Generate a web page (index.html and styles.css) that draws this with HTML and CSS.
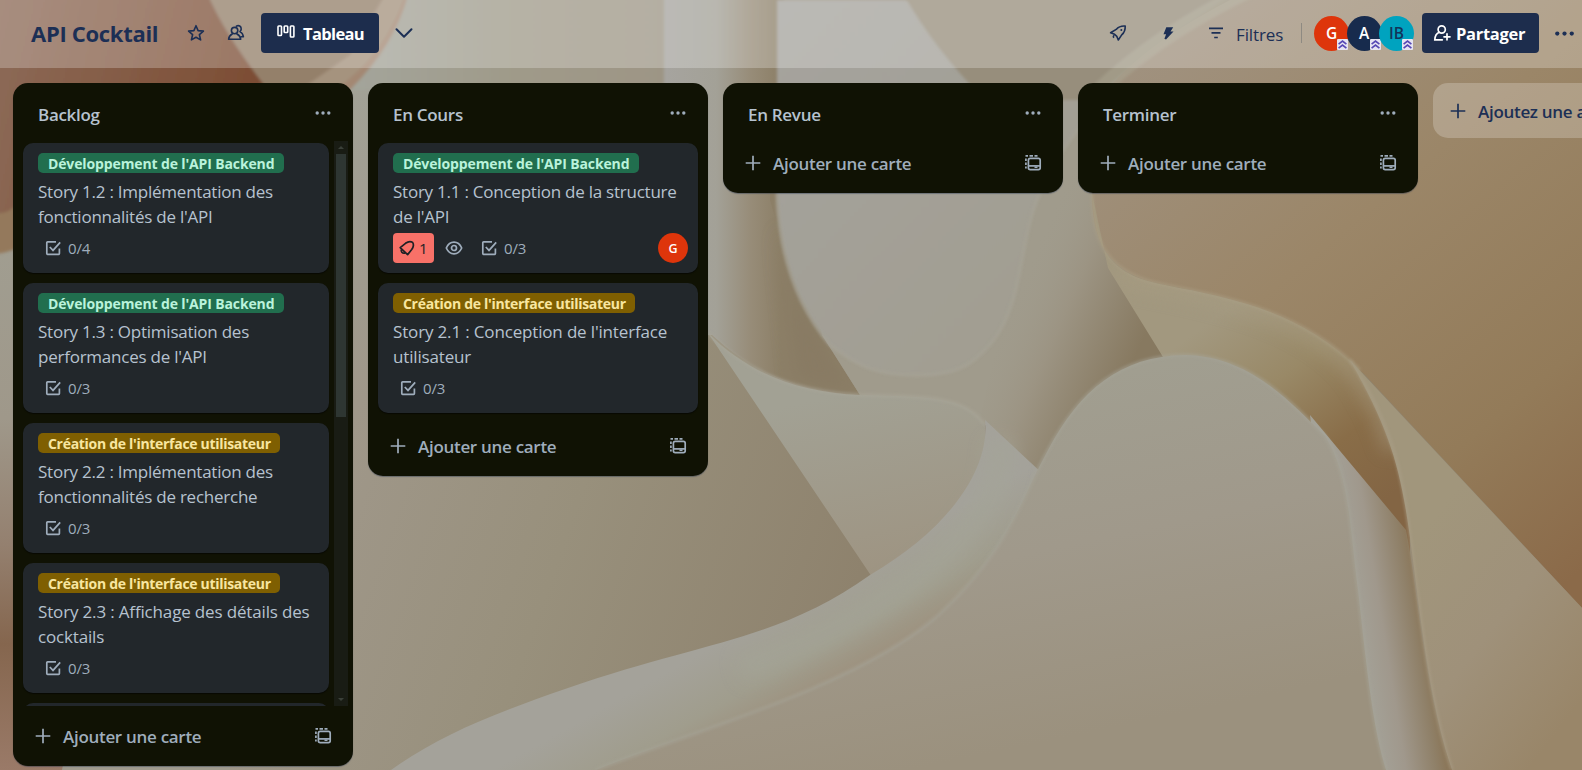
FILE: index.html
```html
<!DOCTYPE html>
<html lang="fr">
<head>
<meta charset="utf-8">
<title>API Cocktail</title>
<link rel="stylesheet" href="styles.css">
</head>
<body>
<svg class="wallpaper" viewBox="0 0 1582 770" preserveAspectRatio="none" aria-hidden="true">
  <defs>
    <filter id="soft" x="-10%" y="-10%" width="120%" height="120%"><feGaussianBlur stdDeviation="1.6"/></filter>
    <filter id="softer" x="-30%" y="-30%" width="160%" height="160%"><feGaussianBlur stdDeviation="9"/></filter>
    <linearGradient id="base" gradientUnits="userSpaceOnUse" x1="360" y1="400" x2="860" y2="580"><stop offset="0" stop-color="#9f9789"/><stop offset=".45" stop-color="#98907c"/><stop offset="1" stop-color="#8e826d"/></linearGradient>
    <linearGradient id="rust" gradientUnits="userSpaceOnUse" x1="0" y1="0" x2="260" y2="60"><stop offset="0" stop-color="#8c6a57"/><stop offset="1" stop-color="#7c4d34"/></linearGradient>
    <linearGradient id="edge" x1="0" y1="0" x2="0" y2="1"><stop offset="0" stop-color="#a2a397"/><stop offset=".5" stop-color="#9f988a"/><stop offset=".68" stop-color="#94806f"/><stop offset=".82" stop-color="#85664e"/><stop offset="1" stop-color="#9a7a68"/></linearGradient>
    <linearGradient id="gap" x1="0" y1="0" x2="0" y2="1"><stop offset="0" stop-color="#a2a297"/><stop offset="1" stop-color="#9f9789"/></linearGradient>
    <linearGradient id="topmid" gradientUnits="userSpaceOnUse" x1="360" y1="0" x2="664" y2="0"><stop offset="0" stop-color="#a3a49a"/><stop offset=".5" stop-color="#9f9a89"/><stop offset="1" stop-color="#9d9585"/></linearGradient>
    <linearGradient id="column" gradientUnits="userSpaceOnUse" x1="664" y1="0" x2="780" y2="0"><stop offset="0" stop-color="#a6a49f"/><stop offset=".45" stop-color="#a3a197"/><stop offset=".75" stop-color="#978c78"/><stop offset="1" stop-color="#8c7f67"/></linearGradient>
    <linearGradient id="petal" x1="0" y1="0" x2="1" y2="1"><stop offset="0" stop-color="#a5a39e"/><stop offset="1" stop-color="#a09c8d"/></linearGradient>
    <linearGradient id="sleeve" gradientUnits="userSpaceOnUse" x1="1020" y1="280" x2="1145" y2="335"><stop offset="0" stop-color="#a09b8c" stop-opacity="0"/><stop offset=".4" stop-color="#9c9483"/><stop offset="1" stop-color="#877960"/></linearGradient>
    <linearGradient id="leaf" gradientUnits="userSpaceOnUse" x1="860" y1="390" x2="900" y2="570"><stop offset="0" stop-color="#a2a194"/><stop offset="1" stop-color="#9e9482"/></linearGradient>
    <linearGradient id="ribbon" gradientUnits="userSpaceOnUse" x1="750" y1="625" x2="795" y2="705"><stop offset="0" stop-color="#a4a29a"/><stop offset=".6" stop-color="#a09d8d"/><stop offset="1" stop-color="#9d917e"/></linearGradient>
    <linearGradient id="dome" x1="0" y1="0" x2=".4" y2="1"><stop offset="0" stop-color="#a1a294"/><stop offset=".6" stop-color="#a0998b"/><stop offset="1" stop-color="#9b917e"/></linearGradient>
    <linearGradient id="sand" gradientUnits="userSpaceOnUse" x1="1140" y1="40" x2="1582" y2="570"><stop offset="0" stop-color="#a09280"/><stop offset=".4" stop-color="#9b8668"/><stop offset=".75" stop-color="#937b59"/><stop offset="1" stop-color="#8b6a49"/></linearGradient>
    <linearGradient id="fold" gradientUnits="userSpaceOnUse" x1="1240" y1="300" x2="1385" y2="500"><stop offset="0" stop-color="#a2987f"/><stop offset=".35" stop-color="#998967"/><stop offset=".7" stop-color="#896d48"/><stop offset="1" stop-color="#836544"/></linearGradient>
    <linearGradient id="stem" gradientUnits="userSpaceOnUse" x1="1352" y1="600" x2="1426" y2="588"><stop offset="0" stop-color="#a4a298"/><stop offset=".35" stop-color="#a0988c"/><stop offset=".75" stop-color="#8f8068"/><stop offset="1" stop-color="#88704f"/></linearGradient>
    <linearGradient id="sail" gradientUnits="userSpaceOnUse" x1="1400" y1="560" x2="1582" y2="700"><stop offset="0" stop-color="#a1967c"/><stop offset=".5" stop-color="#9f917a"/><stop offset="1" stop-color="#998669"/></linearGradient>
    <clipPath id="foldclip"><path d="M1092 193C1094 250 1110 275 1165 285C1230 298 1300 310 1360 370C1395 430 1403 475 1410 550L1325 436 1163 357 1108 268Z"/></clipPath>
  </defs>
  <rect width="1582" height="770" fill="url(#base)"/>
  <rect y="68" width="200" height="702" fill="url(#edge)"/>
  <path d="M62 770 66 750H230V770Z" fill="#a09b8e"/>
  <rect x="345" y="68" width="30" height="332" fill="url(#gap)"/>
  <g filter="url(#soft)">
    <path d="M-5-5H270V140H20V205Q10 214-5 214Z" fill="url(#rust)"/>
    <path d="M-5 214Q10 214 22 200V245Q10 253-5 254Z" fill="#94795c"/>
    <path d="M208-5Q225 35 268 90H350L420-5Z" fill="#94806a"/>
    <path d="M300 90 350 55 385-5H420L350 90Z" fill="#a5937e"/>
    <path d="M335 90Q385 55 405-5H425L372 90Z" fill="#a38873"/>
    <path d="M408-5Q395 45 350 90H668V-5Z" fill="url(#topmid)"/>
    <path d="M664-5H784V100H664Z" fill="url(#column)"/>
  </g>
  <path d="M668 60H780V200L860 395Q770 390 712 335H668Z" fill="url(#column)"/>
  <path d="M822 335 777 90H1150V360L1060 470 985 425 860 395Z" fill="#a09b8c"/>
  <path d="M780 100V195L822 335 800 300 770 200V100Z" fill="#8c7f67"/>
  <path d="M1000 330 1045 185 1130 68H1190V370L1045 480 980 418Z" fill="url(#sleeve)"/>
  <path d="M775 200Q780 270 822 335L856 392Q820 392 795 380Z" fill="#857760" opacity=".5" filter="url(#softer)"/>
  <path d="M822 335 860 395H900L900 360Z" fill="#a09b8c"/>
  <path d="M777 0V193C779 260 800 310 830 345C860 368 880 375 915 375C960 376 975 362 992 342C1025 300 1018 240 1040 193C1055 150 1095 110 1130 68V0Z" fill="url(#petal)" filter="url(#soft)"/>
  <path d="M777 193C779 260 800 310 830 345C860 368 880 375 915 375C960 376 975 362 992 342C1025 300 1018 240 1040 193C1055 150 1095 110 1130 68" fill="none" stroke="#a8a599" stroke-width="3" opacity=".6" filter="url(#soft)"/>
  <path d="M904-5Q935 50 985 100H1095Q1110 80 1180 30L1230-5Z" fill="#978e7c" filter="url(#soft)"/>
  <path d="M1092 193V110Q1130 50 1240-5H1582V608L1365 375C1300 310 1230 298 1165 285C1110 275 1092 245 1092 193Z" fill="url(#sand)"/>
  <path d="M1085 105Q1150 35 1270-20" fill="none" stroke="#a8a38f" stroke-width="16" opacity=".6" filter="url(#soft)"/>
  <path d="M1092 193C1094 250 1110 275 1165 285C1230 298 1300 310 1360 370L1410 460V560H1406L1325 436 1163 357 1108 268Z" fill="url(#fold)"/>
  <g clip-path="url(#foldclip)"><path d="M1120 275C1220 294 1310 312 1358 372C1380 405 1390 430 1394 450" fill="none" stroke="#a99e84" stroke-width="20" opacity=".5" filter="url(#softer)"/></g>
  <path d="M1092 193C1092 245 1110 275 1165 285C1230 298 1300 310 1360 370" fill="none" stroke="#aa9f85" stroke-width="3" opacity=".6" filter="url(#soft)"/>
  <path d="M1350 360 1582 608V770H1452C1432 710 1423 640 1413 560C1402 475 1395 440 1350 360Z" fill="url(#sail)"/>
  <path d="M1310 415 1406 530C1418 590 1424 690 1452 770H1350Z" fill="url(#stem)"/>
  <path d="M1350 360C1395 430 1403 475 1413 560C1423 640 1432 710 1452 770" fill="none" stroke="#aa9f88" stroke-width="3" opacity=".6" filter="url(#soft)"/>
  <path d="M708 333C750 375 800 392 860 395C930 397 965 396 985 425L990 500 930 590 872 577Z" fill="url(#leaf)"/>
  <path d="M708 333C750 375 800 392 860 395C930 397 965 396 985 425" fill="none" stroke="#aaa79a" stroke-width="3" opacity=".6" filter="url(#soft)"/>
  <path d="M985 420C990 465 955 525 870 575C780 640 700 642 568 688C490 715 440 735 391 770H640L1000 630 1044 475Z" fill="url(#ribbon)"/>
  <path d="M1000 440C1004 480 985 530 900 590C860 620 800 650 740 670" fill="none" stroke="#a4a598" stroke-width="26" opacity=".6" filter="url(#softer)"/>
  <path d="M596 770C680 735 850 690 936 617C1010 550 1020 500 1048 450C1080 390 1120 356 1185 355C1250 356 1290 402 1325 436C1350 475 1350 530 1358 590C1366 660 1372 725 1386 770Z" fill="url(#dome)"/>
  <path d="M596 770C680 735 850 690 936 617C1010 550 1020 500 1048 450C1080 390 1120 356 1185 355C1250 356 1290 402 1325 436C1350 475 1350 530 1358 590C1366 660 1372 725 1386 770" fill="none" stroke="#a6a498" stroke-width="3" opacity=".6" filter="url(#soft)"/>
</svg>

<svg class="sprite" aria-hidden="true">
  <symbol id="i-plus" viewBox="0 0 20 20"><path d="M10 2.7v14.6M2.7 10h14.6" fill="none" stroke="currentColor" stroke-width="1.7"/></symbol>
  <symbol id="i-dots" viewBox="0 0 20 20"><g fill="currentColor"><circle cx="4.2" cy="10" r="1.7"/><circle cx="10" cy="10" r="1.7"/><circle cx="15.8" cy="10" r="1.7"/></g></symbol>
  <symbol id="i-template" viewBox="0 0 20 20"><g fill="none" stroke="currentColor" stroke-width="1.7"><rect x="5.4" y="5.4" width="11.8" height="11.2" rx="1.8"/><path d="M5.4 12.900H17.200"/><path d="M2.900 5.500V8M2.900 9.500V12M2.900 13.500V15.500M2.500 2.900H5M6.500 2.900H10M11.500 2.900H14.500"/></g><path d="M11.500 13.500h3v1.500h-3z" fill="currentColor"/></symbol>
  <symbol id="i-check" viewBox="0 0 20 20"><path d="M13 3.8H4.600a.8.800 0 0 0-.8.800v11a.8.800 0 0 0 .8.800h11a.8.800 0 0 0 .8-.8V10.500M6.800 9l3.200 3.400 7.200-8" fill="none" stroke="currentColor" stroke-width="1.700"/></symbol>
  <symbol id="i-eye" viewBox="0 0 20 20"><g fill="none" stroke="currentColor" stroke-width="1.700"><path d="M2.300 10C4 6.200 6.800 4.200 10 4.200S16 6.200 17.700 10C16 13.800 13.200 15.800 10 15.800S4 13.800 2.300 10Z"/><circle cx="10" cy="10" r="2.500"/></g></symbol>
  <symbol id="i-bell" viewBox="0 0 20 20"><g fill="none" stroke="currentColor" stroke-width="1.700" stroke-linejoin="round"><path d="M3.200 9.600 8.500 5.300C11 3.500 13.800 3.200 15.600 4.400C16.800 6.200 16.500 9 14.700 11.500L10.600 16.600Z"/><path d="M4.600 11.500c-1.200 1.600.6 4.400 3.600 3.500"/></g></symbol>
  <symbol id="i-star" viewBox="0 0 20 20"><path d="m10 2.700 2.100 4.900 5.300.5-4 3.600 1.200 5.200L10 14.200l-4.600 2.700 1.200-5.200-4-3.600 5.300-.5Z" fill="none" stroke="currentColor" stroke-width="1.600" stroke-linejoin="round"/></symbol>
  <symbol id="i-people" viewBox="0 0 20 20"><g fill="none" stroke="currentColor" stroke-width="1.600" stroke-linejoin="round" stroke-linecap="round"><circle cx="8.600" cy="7.600" r="3.200"/><path d="M2.600 16.300c.2-2.600 1.700-4.300 3.600-5.300M11 11c2 1 3.500 2.700 3.700 5.300H2.600M10.400 3.200c2.200-1.500 5 .1 4.800 2.900-.1 1.200-.6 2-1.300 2.500 2 1 3.200 2.800 3.500 5.200h-2"/></g></symbol>
  <symbol id="i-board" viewBox="0 0 20 20"><g fill="none" stroke="currentColor" stroke-width="1.600"><rect x="2" y="4" width="3.500" height="9.500" rx=".8"/><rect x="8.200" y="4" width="3.500" height="6.500" rx=".8"/><rect x="14.400" y="4" width="3.500" height="11" rx=".8"/></g></symbol>
  <symbol id="i-down" viewBox="0 0 20 20"><path d="m2.500 6.200 7.500 7.600 7.500-7.600" fill="none" stroke="currentColor" stroke-width="2" stroke-linecap="round" stroke-linejoin="round"/></symbol>
  <symbol id="i-rocket" viewBox="0 0 20 20"><g fill="none" stroke="currentColor" stroke-width="1.600" stroke-linejoin="round"><path d="M2.600 9.800 8.200 6.400C10.400 3.800 13.400 2.700 17.200 3c.2 3.800-.9 6.700-3.500 8.900L10.300 17 8.800 13.400 6.600 11.200Z"/><path d="M6.300 12c-1 .8-1.100 2-.6 2.800"/></g><circle cx="13.300" cy="6.900" r="1" fill="currentColor"/></symbol>
  <symbol id="i-bolt" viewBox="0 0 20 20"><path d="M8.300 4.200h6.900l-2.700 4.300h3L8 16.500l-1.600-.8 1.700-4.500H5.500Z" fill="currentColor"/></symbol>
  <symbol id="i-filter" viewBox="0 0 20 20"><path d="M3 5.300h14M5.500 9.900h9M8.200 14.500h3.600" fill="none" stroke="currentColor" stroke-width="1.700"/></symbol>
  <symbol id="i-adduser" viewBox="0 0 20 20"><g fill="none" stroke="currentColor" stroke-width="1.700" stroke-linecap="round"><circle cx="9.700" cy="6.500" r="3.600"/><path d="M7.300 9.300C4.500 10.500 2.900 13 2.800 16.800h7.500M15 10.800v6M12 13.800h6"/></g></symbol>
  <symbol id="i-admin" viewBox="0 0 11 11"><rect width="11" height="11" rx="1" fill="#e6e4f2"/><path d="M1.600 5.200 5.500 2.100l3.900 3.100M1.600 9.100 5.500 6l3.900 3.100" fill="none" stroke="#5648b5" stroke-width="1.700"/></symbol>
</svg>

<header class="bar">
  <h1 class="board-name">API Cocktail</h1>
  <svg class="icon star"><use href="#i-star"/></svg>
  <svg class="icon people"><use href="#i-people"/></svg>
  <button class="btn view"><svg class="icon"><use href="#i-board"/></svg><span>Tableau</span></button>
  <svg class="icon down"><use href="#i-down"/></svg>
  <div class="tools">
    <svg class="icon rocket"><use href="#i-rocket"/></svg>
    <svg class="icon bolt"><use href="#i-bolt"/></svg>
    <svg class="icon filter"><use href="#i-filter"/></svg>
    <span class="filter-text">Filtres</span>
    <span class="divider"></span>
    <div class="members">
      <span class="avatar red">G<svg class="admin"><use href="#i-admin"/></svg></span>
      <span class="avatar navy">A<svg class="admin"><use href="#i-admin"/></svg></span>
      <span class="avatar cyan">IB<svg class="admin"><use href="#i-admin"/></svg></span>
    </div>
    <button class="btn share"><svg class="icon"><use href="#i-adduser"/></svg><span>Partager</span></button>
    <svg class="more"><use href="#i-dots"/></svg>
  </div>
</header>

<main class="board">
  <section class="list full">
    <div class="list-head"><h2>Backlog</h2><svg class="icon"><use href="#i-dots"/></svg></div>
    <div class="scroller">
      <div class="cards">
        <article class="card"><span class="label green">Développement de l'API Backend</span><p>Story 1.2 : Implémentation des<br>fonctionnalités de l'API</p><div class="badges"><span class="badge"><svg class="icon"><use href="#i-check"/></svg><span>0/4</span></span></div></article>
        <article class="card"><span class="label green">Développement de l'API Backend</span><p>Story 1.3 : Optimisation des<br>performances de l'API</p><div class="badges"><span class="badge"><svg class="icon"><use href="#i-check"/></svg><span>0/3</span></span></div></article>
        <article class="card"><span class="label gold">Création de l'interface utilisateur</span><p>Story 2.2 : Implémentation des<br>fonctionnalités de recherche</p><div class="badges"><span class="badge"><svg class="icon"><use href="#i-check"/></svg><span>0/3</span></span></div></article>
        <article class="card"><span class="label gold">Création de l'interface utilisateur</span><p class="wide">Story 2.3 : Affichage des détails des<br>cocktails</p><div class="badges"><span class="badge"><svg class="icon"><use href="#i-check"/></svg><span>0/3</span></span></div></article>
        <article class="card"></article>
      </div>
      <div class="track"><i class="arrow up"></i><div class="thumb"></div><i class="arrow dn"></i></div>
    </div>
    <div class="add"><svg class="icon"><use href="#i-plus"/></svg><span>Ajouter une carte</span><svg class="icon"><use href="#i-template"/></svg></div>
  </section>

  <section class="list">
    <div class="list-head"><h2>En Cours</h2><svg class="icon"><use href="#i-dots"/></svg></div>
    <div class="cards">
      <article class="card"><span class="label green">Développement de l'API Backend</span><p>Story 1.1 : Conception de la structure<br>de l'API</p>
        <div class="badges"><span class="badge alert"><svg class="icon"><use href="#i-bell"/></svg><span>1</span></span><svg class="icon eye"><use href="#i-eye"/></svg><span class="badge"><svg class="icon"><use href="#i-check"/></svg><span>0/3</span></span><span class="avatar small red">G</span></div></article>
      <article class="card"><span class="label gold">Création de l'interface utilisateur</span><p class="wide">Story 2.1 : Conception de l'interface<br>utilisateur</p><div class="badges"><span class="badge"><svg class="icon"><use href="#i-check"/></svg><span>0/3</span></span></div></article>
    </div>
    <div class="add"><svg class="icon"><use href="#i-plus"/></svg><span>Ajouter une carte</span><svg class="icon"><use href="#i-template"/></svg></div>
  </section>

  <section class="list empty">
    <div class="list-head"><h2>En Revue</h2><svg class="icon"><use href="#i-dots"/></svg></div>
    <div class="add"><svg class="icon"><use href="#i-plus"/></svg><span>Ajouter une carte</span><svg class="icon"><use href="#i-template"/></svg></div>
  </section>

  <section class="list empty">
    <div class="list-head"><h2>Terminer</h2><svg class="icon"><use href="#i-dots"/></svg></div>
    <div class="add"><svg class="icon"><use href="#i-plus"/></svg><span>Ajouter une carte</span><svg class="icon"><use href="#i-template"/></svg></div>
  </section>

  <div class="new-list"><svg class="icon"><use href="#i-plus"/></svg><span>Ajoutez une autre liste</span></div>
</main>
</body>
</html>
```
FILE: styles.css
```css
* { box-sizing: border-box; }
body {
  margin: 0;
  height: 770px;
  overflow: hidden;
  position: relative;
  font-family: "Open Sans", "Noto Sans", sans-serif;
  font-size: 17px;
  color: #b6c2cf;
}
.wallpaper { position: absolute; inset: 0; width: 1582px; height: 770px; z-index: -1; }
.sprite { position: absolute; width: 0; height: 0; }
.icon { width: 20px; height: 20px; flex: none; display: block; }
h1, h2, p { margin: 0; }

/* top bar */
.bar {
  display: flex;
  align-items: center;
  height: 68px;
  padding: 0 0 2px 31px;
  background: rgba(255, 255, 255, .24);
  color: #1c2f55;
}
.board-name { width: 155px; font-size: 22px; line-height: 30px; font-weight: 700; letter-spacing: -.3px; white-space: nowrap; }
.people { margin-left: 20px; }
.btn {
  display: flex;
  align-items: center;
  flex: none;
  height: 40px;
  padding: 0;
  border: 0;
  border-radius: 4px;
  background: #1d2d4d;
  color: #fff;
  font: 700 16.5px/20px "Open Sans", "Noto Sans", sans-serif;
  letter-spacing: -.3px;
}
.btn span { padding-top: 2px; }
.view { width: 118px; margin-left: 15px; padding-left: 15px; gap: 7px; letter-spacing: -.65px; }
.view .icon { margin-top: -2px; }
.down { margin-left: 15px; }
.tools { display: flex; align-items: center; margin-left: auto; width: 474px; height: 40px; }
.bolt { margin-left: 30px; }
.filter { margin-left: 28px; }
.filter-text { width: 64px; flex: none; margin-left: 10px; padding-top: 2px; font-size: 17px; letter-spacing: -.1px; font-weight: 500; }
.divider { width: 1px; flex: none; height: 20px; background: #8e8a82; margin-left: 1px; }
.members { display: flex; flex: none; margin-left: 12px; width: 100px; }
.avatar {
  position: relative;
  display: flex;
  align-items: center;
  justify-content: center;
  width: 35px;
  height: 35px;
  margin-right: -2.5px;
  flex: none;
  border-radius: 50%;
  color: #fff;
  font-size: 15.5px;
  font-weight: 600;
}
.red { background: #de350b; }
.navy { background: #172b4d; }
.cyan { background: #00a3bf; color: #12345a; }
.admin { position: absolute; right: 1px; bottom: 1px; width: 11px; height: 11px; }
.share { width: 117px; margin-left: 8px; padding-left: 10px; gap: 4px; }
.more { width: 25px; height: 25px; margin-left: 13px; flex: none; }

/* board */
.board { display: flex; align-items: flex-start; gap: 15px; height: 702px; padding: 15px 0 0 13px; overflow: hidden; }
.list {
  width: 340px;
  flex: none;
  border-radius: 15px;
  background: #101204;
  box-shadow: 0 1px 1px rgba(9, 30, 66, .35);
}
.list.full { height: 683px; display: flex; flex-direction: column; }
.list-head { display: flex; justify-content: space-between; height: 58px; padding: 20px 20px 0 25px; flex: none; }
.empty .list-head { height: 50px; }
.list-head h2 { padding-top: 1px; font-size: 17px; line-height: 22px; font-weight: 600; letter-spacing: -.3px; }
.list-head .icon { color: #9fadbc; }
.scroller { display: flex; height: 565px; overflow: hidden; flex: none; }
.cards { display: flex; flex-direction: column; gap: 10px; flex: 1; padding: 2px 10px 3px; }
.scroller .cards { padding-right: 5px; }
.card {
  height: 130px;
  flex: none;
  padding: 10px 10px 0 15px;
  border-radius: 10px;
  background: #22272b;
  box-shadow: 0 1px 1px rgba(3, 4, 4, .6);
}
.label {
  display: flex;
  align-items: center;
  width: 246px;
  height: 20px;
  padding: 1px 0 0 10px;
  border-radius: 5px;
  font-size: 14px;
  line-height: 19px;
  font-weight: 700;
  letter-spacing: -.13px;
  white-space: nowrap;
}
.green { background: #216e4e; color: #baf3db; }
.gold { width: 242px; background: #7f5f01; color: #f8e6a0; letter-spacing: -.3px; }
.card p { margin-top: 6px; font-size: 17px; line-height: 25px; letter-spacing: -.24px; white-space: nowrap; }
.card .wide { letter-spacing: -.16px; }
.badges { display: flex; align-items: center; height: 30px; margin-top: 4px; color: #9fadbc; }
.badge { display: flex; align-items: center; gap: 5px; padding-left: 5px; font-size: 15px; line-height: 20px; letter-spacing: -.2px; }
.alert { width: 41px; height: 30px; padding-left: 4px; gap: 2px; border-radius: 4px; background: #f87168; color: #1d2125; }
.eye { margin: 0 10px; }
.small { width: 30px; height: 30px; margin: 0 0 0 auto; font-size: 12.5px; }
.track { display: flex; flex-direction: column; align-items: center; width: 14px; margin-right: 5px; background: #191c14; }
.thumb { width: 10px; height: 263px; margin: 5px 0 auto; background: #2e3632; }
.arrow { width: 0; height: 0; border: 3.5px solid transparent; }
.up { margin-top: 2px; border-bottom-color: #3b4039; }
.dn { margin-bottom: 2px; border-top-color: #3b4039; }
.add { display: flex; align-items: center; height: 60px; padding: 0 20px; color: #9fadbc; font-weight: 600; font-size: 17px; }
.add span { flex: 1; margin-left: 10px; padding-top: 1px; letter-spacing: -.3px; }
.new-list {
  display: flex;
  align-items: center;
  gap: 10px;
  width: 340px;
  height: 55px;
  padding-left: 15px;
  flex: none;
  border-radius: 15px;
  background: rgba(255, 255, 255, .22);
  color: #1c2f55;
  font-weight: 600;
  letter-spacing: -.3px;
  white-space: nowrap;
}
.new-list span { padding-top: 2px; }
```
